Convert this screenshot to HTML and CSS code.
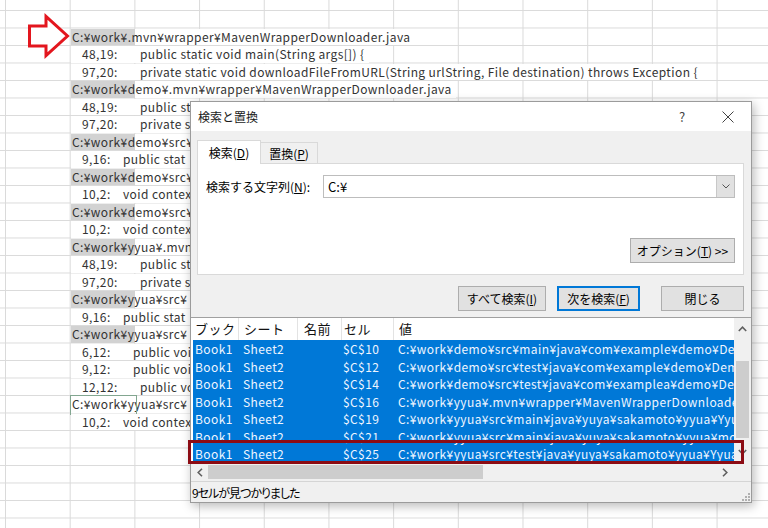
FILE: index.html
```html
<!DOCTYPE html>
<html lang="ja">
  <head>
    <meta charset="UTF-8" />
    <meta name="viewport" content="width=device-width, initial-scale=1.0" />
    <title>検索と置換</title>
    <link rel="stylesheet" href="styles.css">
  </head>
  <body>
    <div class="sheet">
      <svg class="arrow" width="80" height="70" viewBox="0 0 80 70">
        <polygon points="29.5,26 46,26 46,16.5 67.5,36 46,55.5 46,46 29.5,46" fill="#fff" stroke="#e3161e" stroke-width="3" stroke-linejoin="miter" />
      </svg>

      <div class="rows">
        <div class="row"><span class="txt path">C:¥work¥.mvn¥wrapper¥MavenWrapperDownloader.java</span></div>
        <div class="row"><span class="txt"><span class="num w58">48,19:</span>public static void main(String args[]) {</span></div>
        <div class="row"><span class="txt"><span class="num w58">97,20:</span>private static void downloadFileFromURL(String urlString, File destination) throws Exception {</span></div>
        <div class="row"><span class="txt path">C:¥work¥demo¥.mvn¥wrapper¥MavenWrapperDownloader.java</span></div>
        <!-- rows below are partly hidden by the dialog -->
        <div class="row"><span class="txt under"><span class="num w58">48,19:</span>public st</span></div>
        <div class="row"><span class="txt under"><span class="num w58">97,20:</span>private st</span></div>
        <div class="row"><span class="txt path under">C:¥work¥demo¥src¥</span></div>
        <div class="row"><span class="txt under"><span class="num w41">9,16:</span>public stat</span></div>
        <div class="row"><span class="txt path under">C:¥work¥demo¥src¥</span></div>
        <div class="row"><span class="txt under"><span class="num w41">10,2:</span>void contex</span></div>
        <div class="row"><span class="txt path under">C:¥work¥demo¥src¥</span></div>
        <div class="row"><span class="txt under"><span class="num w41">10,2:</span>void contex</span></div>
        <div class="row"><span class="txt path under">C:¥work¥yyua¥.mvn</span></div>
        <div class="row"><span class="txt under"><span class="num w58">48,19:</span>public st</span></div>
        <div class="row"><span class="txt under"><span class="num w58">97,20:</span>private st</span></div>
        <div class="row"><span class="txt path under">C:¥work¥yyua¥src¥</span></div>
        <div class="row"><span class="txt under"><span class="num w41">9,16:</span>public stat</span></div>
        <div class="row"><span class="txt path under">C:¥work¥yyua¥src¥</span></div>
        <div class="row"><span class="txt under"><span class="num w51">6,12:</span>public voi</span></div>
        <div class="row"><span class="txt under"><span class="num w51">9,12:</span>public voi</span></div>
        <div class="row"><span class="txt under"><span class="num w58">12,12:</span>public vo</span></div>
        <div class="row"><span class="txt picked under">C:¥work¥yyua¥src¥</span></div>
        <div class="row"><span class="txt under"><span class="num w41">10,2:</span>void contex</span></div>
      </div>

      <div class="dialog">
        <div class="titlebar">
          <span class="title">検索と置換</span>
          <span class="tb-btn help">?</span>
          <span class="tb-btn">
            <svg width="12" height="12" viewBox="0 0 12 12"><path d="M0.5 0.5 L11.5 11.5 M11.5 0.5 L0.5 11.5" stroke="#444" stroke-width="1" fill="none" /></svg>
          </span>
        </div>

        <div class="tabs">
          <div class="tab active">検索(<u>D</u>)</div>
          <div class="tab">置換(<u>P</u>)</div>
        </div>

        <div class="panel">
          <div class="find-row">
            <span class="label">検索する文字列(<u>N</u>):</span>
            <div class="combo">
              <span class="combo-text">C:¥</span>
              <span class="combo-btn">
                <svg width="8" height="5" viewBox="0 0 8 5"><polyline points="0.5,0.5 4,4 7.5,0.5" stroke="#555" fill="none" /></svg>
              </span>
            </div>
          </div>
          <div class="opt-row">
            <div class="btn opt">オプション(<u>T</u>) &gt;&gt;</div>
          </div>
        </div>

        <div class="actions">
          <div class="btn all">すべて検索(<u>I</u>)</div>
          <div class="btn next">次を検索(<u>F</u>)</div>
          <div class="btn close">閉じる</div>
        </div>

        <div class="results">
          <div class="results-main">
            <div class="results-body">
              <div class="grid head">
                <span>ブック</span><span>シート</span><span>名前</span><span>セル</span><span>値</span>
              </div>
              <div class="grid hit"><span>Book1</span><span>Sheet2</span><span></span><span>$C$10</span><span>C:¥work¥demo¥src¥main¥java¥com¥example¥demo¥DemoApplication.java</span></div>
              <div class="grid hit"><span>Book1</span><span>Sheet2</span><span></span><span>$C$12</span><span>C:¥work¥demo¥src¥test¥java¥com¥example¥demo¥DemoApplicationTests.java</span></div>
              <div class="grid hit"><span>Book1</span><span>Sheet2</span><span></span><span>$C$14</span><span>C:¥work¥demo¥src¥test¥java¥com¥examplea¥demo¥DemoApplicationTests.java</span></div>
              <div class="grid hit"><span>Book1</span><span>Sheet2</span><span></span><span>$C$16</span><span>C:¥work¥yyua¥.mvn¥wrapper¥MavenWrapperDownloader.java</span></div>
              <div class="grid hit"><span>Book1</span><span>Sheet2</span><span></span><span>$C$19</span><span>C:¥work¥yyua¥src¥main¥java¥yuya¥sakamoto¥yyua¥YyuaApplication.java</span></div>
              <div class="grid hit"><span>Book1</span><span>Sheet2</span><span></span><span>$C$21</span><span>C:¥work¥yyua¥src¥main¥java¥yuya¥sakamoto¥yyua¥model¥User.java</span></div>
              <div class="grid hit"><span>Book1</span><span>Sheet2</span><span></span><span>$C$25</span><span>C:¥work¥yyua¥src¥test¥java¥yuya¥sakamoto¥yyua¥YyuaApplicationTests.java</span></div>
            </div>
            <div class="vscroll">
              <svg class="sa" width="9" height="6" viewBox="0 0 9 6"><polyline points="0.8,5 4.5,1.2 8.2,5" stroke="#606060" stroke-width="1.6" fill="none" /></svg>
              <div class="vthumb"></div>
              <svg class="sa" width="9" height="6" viewBox="0 0 9 6"><polyline points="0.8,1 4.5,4.8 8.2,1" stroke="#606060" stroke-width="1.6" fill="none" /></svg>
            </div>
          </div>
          <div class="hscroll">
            <svg class="sa" width="6" height="9" viewBox="0 0 6 9"><polyline points="5,0.8 1.2,4.5 5,8.2" stroke="#606060" stroke-width="1.6" fill="none" /></svg>
            <div class="hthumb"></div>
            <svg class="sa right" width="6" height="9" viewBox="0 0 6 9"><polyline points="1,0.8 4.8,4.5 1,8.2" stroke="#606060" stroke-width="1.6" fill="none" /></svg>
            <div class="corner"></div>
          </div>
        </div>

        <div class="status">
          <span>9セルが見つかりました</span>
          <svg class="grip" width="10" height="10" viewBox="0 0 10 10">
            <rect x="8" y="2" width="2" height="2" fill="#b0b0b0" />
            <rect x="5" y="5" width="2" height="2" fill="#b0b0b0" />
            <rect x="8" y="5" width="2" height="2" fill="#b0b0b0" />
            <rect x="2" y="8" width="2" height="2" fill="#b0b0b0" />
            <rect x="5" y="8" width="2" height="2" fill="#b0b0b0" />
            <rect x="8" y="8" width="2" height="2" fill="#b0b0b0" />
          </svg>
        </div>

        <div class="mark"></div>
      </div>
    </div>
  </body>
</html>
```

FILE: styles.css
```css
* {
  margin: 0;
  padding: 0;
  box-sizing: border-box;
}

body {
  width: 768px;
  height: 528px;
  overflow: hidden;
  background: #fff;
  font-family: "Noto Sans CJK JP", sans-serif;
}

/* spreadsheet behind the dialog */
.sheet {
  position: relative;
  width: 768px;
  height: 528px;
  background-color: #fff;
  background-image: linear-gradient(to right, #dadada 1px, transparent 1px),
    linear-gradient(to bottom, #dadada 1px, transparent 1px);
  background-size: 64.7px 100%, 100% 17.5px;
  background-position: 5px 0, 0 10px;
}

.arrow {
  position: absolute;
  left: 0;
  top: 0;
}

.rows {
  padding-top: 27.5px;
}

.row {
  height: 17.5px;
  padding-top: 1px;
  display: flex;
}

.txt {
  position: relative;
  margin-left: 71px;
  height: 16.5px;
  line-height: 16.5px;
  padding-left: 11px;
  padding-right: 4px;
  background: #fff;
  font-size: 12px;
  letter-spacing: 0.4px;
  color: #333;
  white-space: nowrap;
}

.txt.under {
  width: 119px;
  padding-right: 0;
  overflow: hidden;
}

.txt.path,
.txt.picked {
  padding-left: 1px;
}

.txt.path {
  background: linear-gradient(to right, #d2d2d2 64px, #fff 64px);
}

.txt.picked {
  overflow: visible;
}

.txt.picked::after {
  content: "";
  position: absolute;
  left: -1px;
  top: -1px;
  width: 65px;
  height: 18px;
  border: 1px solid #82a690;
}

.num {
  display: inline-block;
}
.w58 {
  width: 58px;
}
.w51 {
  width: 51px;
}
.w41 {
  width: 41px;
}

/* find & replace dialog */
.dialog {
  position: absolute;
  left: 190px;
  top: 101px;
  width: 562px;
  height: 402px;
  background: #f0f0f0;
  border: 1px solid #9b9b9b;
  box-shadow: 2px 3px 10px rgba(0, 0, 0, 0.28);
  display: flex;
  flex-direction: column;
  font-size: 12px;
  color: #000;
}

.titlebar {
  height: 29px;
  background: #fff;
  display: flex;
  align-items: center;
}

.title {
  padding-left: 7px;
  font-size: 12px;
  color: #1a1a1a;
}

.tb-btn {
  width: 46px;
  height: 29px;
  display: flex;
  align-items: center;
  justify-content: center;
  color: #444;
  font-size: 13px;
}

.tb-btn.help {
  margin-left: auto;
}

.tabs {
  display: flex;
  align-items: flex-end;
  margin: 9px 0 0 6px;
  height: 23px;
}

.tab {
  width: 57px;
  height: 21px;
  border: 1px solid #d9d9d9;
  border-left: none;
  border-bottom: none;
  display: flex;
  align-items: center;
  justify-content: center;
}

.tab.active {
  width: 64px;
  height: 24px;
  margin-bottom: -1px;
  background: #fff;
  border-left: 1px solid #d9d9d9;
  position: relative;
}

.panel {
  margin: 0 7px 0 6px;
  height: 112px;
  background: #fff;
  border: 1px solid #d9d9d9;
  padding: 11px 8px 0 8px;
}

.find-row {
  display: flex;
  align-items: center;
  height: 23px;
}

.label {
  width: 117px;
}

.combo {
  flex: 1;
  height: 23px;
  border: 1px solid #bdbdbd;
  display: flex;
  align-items: center;
}

.combo-text {
  flex: 1;
  padding-left: 4px;
  font-size: 13px;
}

.combo-btn {
  width: 18px;
  height: 21px;
  background: #e1e1e1;
  border-left: 1px solid #c8c8c8;
  display: flex;
  align-items: center;
  justify-content: center;
}

.opt-row {
  display: flex;
  justify-content: flex-end;
  margin-top: 40px;
}

.btn {
  height: 25px;
  background: #e1e1e1;
  border: 1px solid #adadad;
  display: flex;
  align-items: center;
  justify-content: center;
}

.btn.opt {
  width: 105px;
}

.actions {
  display: flex;
  justify-content: flex-end;
  margin: 11px 7px 0 0;
}

.btn.all {
  width: 88px;
}

.btn.next {
  width: 83px;
  margin-left: 11px;
  border: 2px solid #0078d7;
}

.btn.close {
  width: 83px;
  margin-left: 21px;
}

.results {
  margin-top: 6px;
  border-top: 1px solid #a0a0a0;
  background: #fff;
}

.results-main {
  display: flex;
  height: 145px;
}

.results-body {
  flex: 1;
  overflow: hidden;
}

.grid {
  display: grid;
  grid-template-columns: 45px 59px 44px 52px 1fr;
  white-space: nowrap;
  font-size: 12px;
  letter-spacing: 0.4px;
}

.grid span {
  overflow: hidden;
}

.grid span:nth-child(1),
.grid span:nth-child(4) {
  padding-left: 2px;
}
.grid span:nth-child(2),
.grid span:nth-child(5) {
  padding-left: 5px;
}
.grid span:nth-child(3) {
  padding-left: 6px;
}

.head {
  height: 22px;
  line-height: 21px;
  padding-left: 2px;
  font-size: 13px;
  letter-spacing: 0.5px;
  color: #111;
}

.head span + span {
  border-left: 1px solid #e3e3e3;
}

.hit {
  height: 17.5px;
  line-height: 17.5px;
  margin-left: 2px;
  background: #0078d7;
  color: #eef5ff;
}

.vscroll {
  width: 17px;
  background: #f0f0f0;
  display: flex;
  flex-direction: column;
  align-items: center;
  padding-top: 8px;
}

.vthumb {
  width: 13px;
  height: 77px;
  margin: 29px 0 auto;
  background: #cdcdcd;
}

.vscroll .sa:last-child {
  margin-bottom: 8px;
}

.hscroll {
  height: 18px;
  background: #f0f0f0;
  display: flex;
  align-items: center;
  padding-left: 6px;
}

.hthumb {
  width: 275px;
  height: 14px;
  margin-left: 5px;
  background: #cdcdcd;
}

.hscroll .right {
  margin-left: auto;
  margin-right: 6px;
}

.corner {
  width: 17px;
  height: 18px;
  background: #f0f0f0;
}

.status {
  flex: 1;
  border-top: 1px solid #d5d5d5;
  display: flex;
  align-items: center;
  padding-left: 1px;
  font-size: 12px;
  font-feature-settings: "palt";
  letter-spacing: -1px;
  position: relative;
}

.grip {
  position: absolute;
  right: 1px;
  bottom: 1px;
}

/* red frame drawn over the last hit */
.mark {
  position: absolute;
  left: -3px;
  top: 338px;
  width: 556px;
  height: 24px;
  border: 3px solid #8c0c14;
}
```
